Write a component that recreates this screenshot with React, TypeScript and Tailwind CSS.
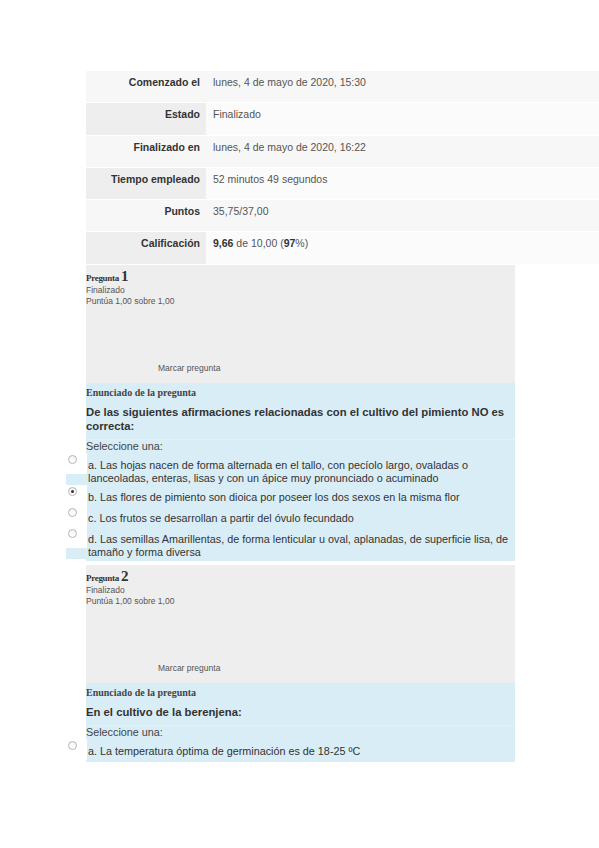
import React from "react";

const sans = "font-['Liberation_Sans',Arial,sans-serif]";
const serif = "font-['Liberation_Serif','DejaVu_Serif',serif]";

const summary = [
  { label: "Comenzado el", value: <>lunes, 4 de mayo de 2020, 15:30</> },
  { label: "Estado", value: <>Finalizado</> },
  { label: "Finalizado en", value: <>lunes, 4 de mayo de 2020, 16:22</> },
  { label: "Tiempo empleado", value: <>52 minutos 49 segundos</> },
  { label: "Puntos", value: <>35,75/37,00</> },
  {
    label: "Calificación",
    value: (
      <>
        <b className="text-[#333]">9,66</b> de 10,00 (<b className="text-[#333]">97</b>%)
      </>
    ),
  },
];

interface Option {
  text: string;
  checked?: boolean;
}

interface Question {
  num: number;
  prompt: string;
  options: Option[];
}

const questions: Question[] = [
  {
    num: 1,
    prompt: "De las siguientes afirmaciones relacionadas con el cultivo del pimiento NO es correcta:",
    options: [
      { text: "a. Las hojas nacen de forma alternada en el tallo, con pecíolo largo, ovaladas o lanceoladas, enteras, lisas y con un ápice muy pronunciado o acuminado" },
      { text: "b. Las flores de pimiento son dioica por poseer los dos sexos en la misma flor", checked: true },
      { text: "c. Los frutos se desarrollan a partir del óvulo fecundado" },
      { text: "d. Las semillas Amarillentas, de forma lenticular u oval, aplanadas, de superficie lisa, de tamaño y forma diversa" },
    ],
  },
  {
    num: 2,
    prompt: "En el cultivo de la berenjena:",
    options: [{ text: "a. La temperatura óptima de germinación es de 18-25 ºC" }],
  },
];

function Radio({ checked }: { checked?: boolean }) {
  return (
    <span className="mt-[2px] ml-[2px] flex h-[9px] w-[9px] items-center justify-center rounded-full border border-[#b5b5b5] bg-gradient-to-b from-[#f4f4f4] to-white">
      {checked && <span className="h-[3px] w-[3px] rounded-full bg-[#333]" />}
    </span>
  );
}

function QuestionBlock({ q }: { q: Question }) {
  return (
    <div className="w-[429px]">
      <div className="flex h-[118px] flex-col bg-[#eeeeee] pt-[4px] text-[#555]">
        <div className={`${serif} flex items-baseline font-bold text-[#333] leading-[14px]`}>
          <span className="text-[9px] tracking-[-0.3px]">Pregunta</span>
          <span className="ml-[2px] text-[15px]">{q.num}</span>
        </div>
        <div className={`${sans} text-[8.5px] leading-[11px]`}>Finalizado</div>
        <div className={`${sans} text-[8.5px] leading-[11px]`}>Puntúa 1,00 sobre 1,00</div>
        <div className={`${sans} mt-auto mb-[9px] pl-[72px] text-[8.5px] leading-[11px]`}>Marcar pregunta</div>
      </div>
      <div className="bg-[#d9edf7] pb-[2px] text-[#333]">
        <div className={`${serif} pt-[2px] text-[10px] font-bold leading-[16px] text-[#444]`}>Enunciado de la pregunta</div>
        <div className={`${sans} mt-[4px] pr-[4px] text-[11.3px] font-bold leading-[14px]`}>{q.prompt}</div>
        <div className={`${sans} mt-[6px] border-t border-[#e3f2f9] text-[10.8px] leading-[13px] text-[#444]`}>Seleccione una:</div>
        <div className="-ml-[20px] bg-[#d9edf7]">
          {q.options.map((o) => (
            <div key={o.text} className="flex items-start">
              <div className="h-[21px] w-[21px] shrink-0 bg-white">
                <Radio checked={o.checked} />
              </div>
              <div className={`${sans} pt-[6px] pl-[1px] pr-[2px] text-[10.8px] leading-[13px] text-[#333]`}>{o.text}</div>
            </div>
          ))}
        </div>
      </div>
    </div>
  );
}

export default function App() {
  return (
    <div className="min-h-[848px] bg-white pt-[71px] pl-[86px]">
      <div className={`${sans} w-[513px] text-[10.5px]`}>
        {summary.map((row, i) => (
          <div key={row.label} className="grid h-[32.3px] grid-cols-[120px_1fr] border-b border-white">
            <div className={`pr-[6px] pt-[4px] text-right font-bold text-[#333] ${i % 2 ? "bg-[#eeeeee]" : "bg-[#f7f7f7]"}`}>
              {row.label}
            </div>
            <div className={`pl-[7px] pt-[4px] text-[#555] ${i % 2 ? "bg-[#fbfbfb]" : "bg-[#f7f7f7]"}`}>{row.value}</div>
          </div>
        ))}
      </div>
      <div className="flex flex-col gap-[4px]">
        {questions.map((q) => (
          <QuestionBlock key={q.num} q={q} />
        ))}
      </div>
    </div>
  );
}
